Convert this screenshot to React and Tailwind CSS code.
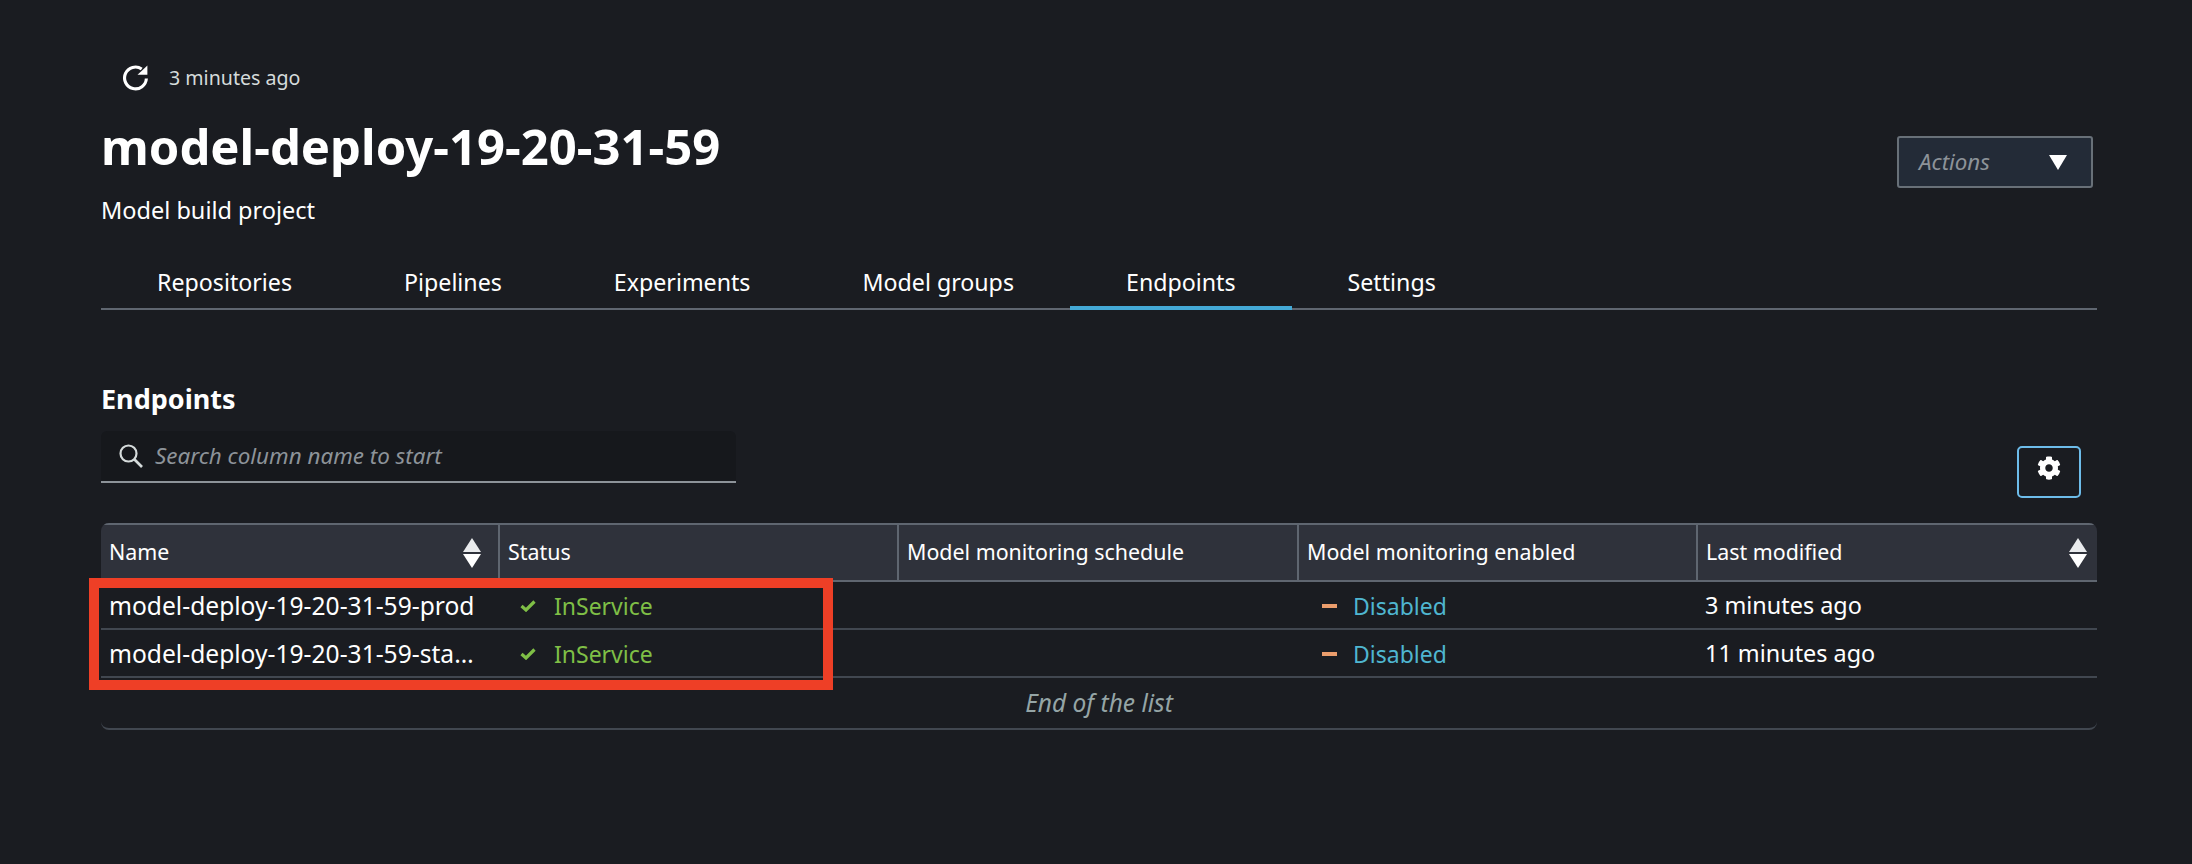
import React from "react";
import { FaCog } from "react-icons/fa";

function SortIcon() {
  return (
    <svg width="18" height="30" viewBox="0 0 18 30" className="shrink-0">
      <path d="M9 0 L18 14 H0 Z" fill="#e9ebed" />
      <path d="M9 30 L18 16 H0 Z" fill="#ffffff" />
    </svg>
  );
}

function Check() {
  return (
    <svg width="16" height="12" viewBox="0 0 16 12" fill="none" className="shrink-0">
      <path d="M1.5 6 L6 10 L14.5 1.5" stroke="#7fbf46" strokeWidth="3.2" />
    </svg>
  );
}

function Row({ name, modified }) {
  return (
    <div className="grid grid-cols-[397px_399px_400px_399px_1fr] h-[48px] pt-[2px] border-b-2 border-[#414750] items-center text-white text-[23.4px]">
      <div className="pl-[8px] pr-[14px] truncate text-[24.6px]">{name}</div>
      <div className="pl-[22px] flex items-center text-[#7fbf46] text-[23px]">
        <Check />
        <span className="ml-[18px]">InService</span>
      </div>
      <div />
      <div className="pl-[25px] flex items-center text-[23px]">
        <span className="w-[15px] h-[4px] bg-[#eb9d6c] shrink-0" />
        <span className="ml-[16px] text-[#4fb6d0]">Disabled</span>
      </div>
      <div className="pl-[9px]">{modified}</div>
    </div>
  );
}

function Th({ children, sort, first, wide }) {
  return (
    <div className={"flex items-center justify-between pl-[8px] h-full text-white text-[21.4px] " + (wide ? "pr-[17px] " : "pr-[10px] ") + (first ? "" : "border-l-2 border-[#5f6670]")}>
      <span>{children}</span>
      {sort && <SortIcon />}
    </div>
  );
}

export default function App() {
  const tabs = ["Repositories", "Pipelines", "Experiments", "Model groups", "Endpoints", "Settings"];
  return (
    <div className="relative w-[2192px] h-[864px] overflow-hidden bg-[#1a1c21] text-white font-['Noto_Sans',sans-serif] pl-[101px] pr-[95px] pt-[62px]">
      <div className="flex items-center h-[32px] pl-[22px]">
        <svg width="27" height="27" viewBox="0 0 26 26" fill="none" className="shrink-0">
          <path d="M22.5 13 A10.5 10.5 0 1 1 18 3.8" stroke="#fff" strokeWidth="3" />
          <path d="M14 9.5 H23.5 V0.5 Z" fill="#fff" />
        </svg>
        <span className="ml-[19px] text-[19.6px] text-[#d5dbdb]">3 minutes ago</span>
      </div>

      <div className="flex justify-between items-start mt-[21px]">
        <div>
          <h1 className="text-[49px] leading-[62px] font-bold">model-deploy-19-20-31-59</h1>
          <p className="mt-[18px] text-[23.5px] leading-[30px]">Model build project</p>
        </div>
        <button className="mt-[21px] mr-[4px] w-[196px] h-[52px] rounded-[3px] border-2 border-[#687078] bg-[#232b37] flex items-center justify-between pl-[20px] pr-[24px]">
          <span className="italic text-[22.3px] text-[#8d9399]">Actions</span>
          <svg width="18" height="15" viewBox="0 0 18 15"><path d="M0 0 H18 L9 15 Z" fill="#fff" /></svg>
        </button>
      </div>

      <div className="flex mt-[32px] h-[53px] border-b-2 border-[#5f6670]">
        {tabs.map((t) => (
          <div key={t} className={"px-[56px] h-[53px] pt-[2px] flex items-center text-[23.2px] border-b-[4px] " + (t === "Endpoints" ? "border-[#44a9d6]" : "border-transparent")}>
            {t}
          </div>
        ))}
      </div>

      <h2 className="mt-[71px] text-[27px] leading-[36px] font-bold">Endpoints</h2>

      <div className="flex items-end justify-between mt-[14px]">
        <div className="w-[635px] h-[52px] bg-[#16181c] border-b-2 border-[#8d9399] rounded-t-[6px] flex items-center pl-[17px]">
          <svg width="26" height="26" viewBox="0 0 26 26" fill="none" className="shrink-0">
            <circle cx="10.5" cy="10.5" r="8" stroke="#d5dbdb" strokeWidth="2.2" />
            <path d="M16 16 L24 24" stroke="#d5dbdb" strokeWidth="2.6" />
          </svg>
          <span className="ml-[11px] italic text-[22.4px] text-[#8d9399]">Search column name to start</span>
        </div>
        <button className="mr-[16px] mb-[-15px] w-[64px] h-[52px] rounded-[5px] border-2 border-[#6dbcea] flex items-start justify-center pt-[8px]">
          <FaCog size={24} color="#ffffff" />
        </button>
      </div>

      <div className="mt-[40px] rounded-[8px] border-b-2 border-[#414750] overflow-hidden">
        <div className="grid grid-cols-[397px_399px_400px_399px_1fr] h-[59px] bg-[#2f323b] border-t-2 border-b-2 border-[#5f6670] items-center">
          <Th first sort wide>Name</Th>
          <Th>Status</Th>
          <Th>Model monitoring schedule</Th>
          <Th>Model monitoring enabled</Th>
          <Th sort>Last modified</Th>
        </div>
        <Row name="model-deploy-19-20-31-59-prod" modified="3 minutes ago" />
        <Row name="model-deploy-19-20-31-59-staging" modified="11 minutes ago" />
        <div className="h-[50px] flex items-center justify-center italic text-[24.5px] text-[#95a5a6]">End of the list</div>
      </div>

      <div className="absolute left-[89px] top-[578px] w-[744px] h-[112px] border-[10px] border-[#ee3f26]" />
    </div>
  );
}
